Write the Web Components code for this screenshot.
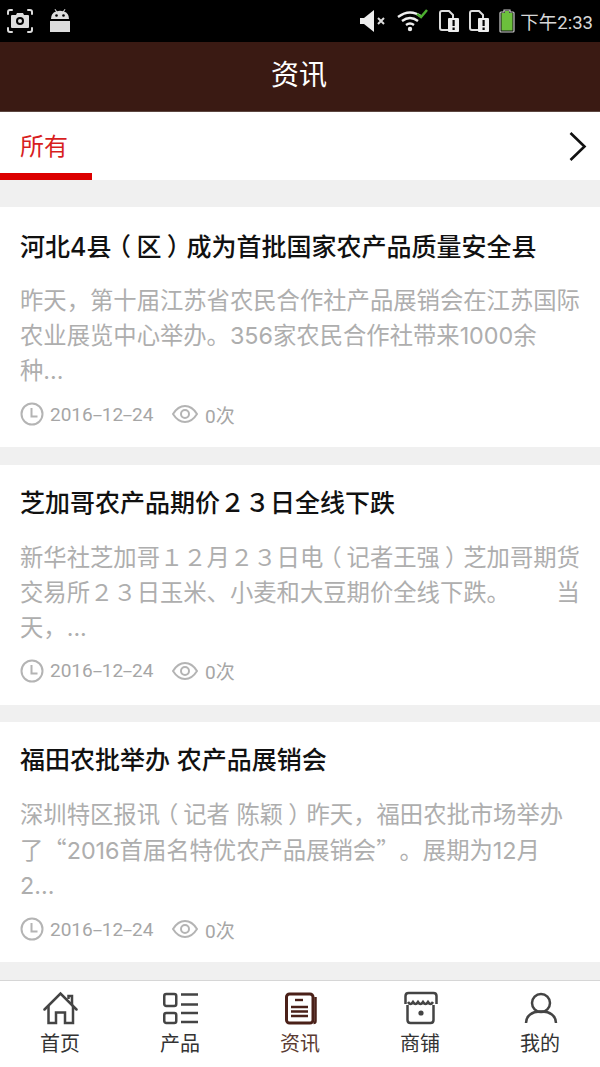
<!DOCTYPE html>
<html lang="zh">
<head>
<meta charset="utf-8">
<title>资讯</title>
<style>
    html, body{ margin: 0; padding: 0; }
    body{
        width: 600px;
        height: 1067px;
        overflow: hidden;
        background: #f0f0f0;
        font-family: Inter, "Noto Sans CJK SC", sans-serif;
        text-spacing-trim: space-all;
        display: flex;
        flex-direction: column;
    }
    news-list{ flex: 1; min-height: 0; }
    .cjk{ font-family: "Noto Sans CJK SC", sans-serif; }
</style>
</head>
<body>
<status-bar></status-bar>
<app-header>资讯</app-header>
<tab-strip>所有</tab-strip>
<news-list>
    <news-card date="2016-12-24" views="0次">
        <span slot="heading">河北4县<wide-mark>（</wide-mark>区<wide-mark>）</wide-mark>成为首批国家农产品质量安全县</span>
        昨天，第十届江苏省农民合作社产品展销会在江苏国际<br>农业展览中心举办。356家农民合作社带来1000余<br>种...
    </news-card>
    <news-card date="2016-12-24" views="0次">
        <span slot="heading">芝加哥农产品期价２３日全线下跌</span>
        新华社芝加哥１２月２３日电<wide-mark>（</wide-mark>记者王强<wide-mark>）</wide-mark>芝加哥期货<br>交易所２３日玉米、小麦和大豆期价全线下跌。　　当<br>天，...
    </news-card>
    <news-card date="2016-12-24" views="0次">
        <span slot="heading">福田农批举办 农产品展销会</span>
        深圳特区报讯<wide-mark>（</wide-mark>记者 陈颖<wide-mark>）</wide-mark>昨天，福田农批市场举办<br>了<span class="cjk">“</span>2016首届名特优农产品展销会<span class="cjk">”</span>。展期为12月<br>2...
    </news-card>
</news-list>
<bottom-nav>
    <nav-item label="首页" icon="home"></nav-item>
    <nav-item label="产品" icon="list"></nav-item>
    <nav-item label="资讯" icon="news" active></nav-item>
    <nav-item label="商铺" icon="shop"></nav-item>
    <nav-item label="我的" icon="user"></nav-item>
</bottom-nav>

<script>
class StatusBar extends HTMLElement {
    constructor() {
        super();
        this.attachShadow({mode: 'open'});
        this.shadowRoot.innerHTML = `
            <style>
                :host{
                    display: flex;
                    align-items: center;
                    height: 42px;
                    flex: none;
                    background: #000;
                    padding: 0 7px 0 7px;
                    color: #d8d8d8;
                }
                svg{ display: block; flex: none; }
                .left{ display: flex; align-items: center; gap: 17px; }
                .right{ margin-left: auto; display: flex; align-items: center; }
                .time{ font-size: 18.500px; margin-left: 5px; font-family: Roboto, "Noto Sans CJK SC", sans-serif; }
            </style>
            <div class="left">
                <svg width="26" height="24" viewBox="0 0 26 24" fill="none" stroke="#ddd" stroke-width="2" stroke-linecap="round">
                    <path d="M1 5V3q0-2 2-2h2M21 1h2q2 0 2 2v2M1 19v2q0 2 2 2h2M21 23h2q2 0 2-2v-2"/>
                    <path fill="#ddd" stroke="none" d="M5 6h4l1-2h6l1 2h4q1 0 1 1v11q0 1-1 1H5q-1 0-1-1V7q0-1 1-1z"/>
                    <circle cx="13" cy="12" r="4" fill="#000" stroke="none"/>
                    <circle cx="13" cy="12" r="2" fill="#ddd" stroke="none"/>
                </svg>
                <svg width="20" height="24" viewBox="0 0 20 24" fill="#ddd">
                    <path d="M1 10q0-6 5-7.500L4.500 0.500l.8-.5L7 2.300q3-1 6 0L14.700 0l.8.5L14 2.500q5 1.500 5 7.500z"/>
                    <circle cx="6.500" cy="6.500" r="1.300" fill="#000"/>
                    <circle cx="13.500" cy="6.500" r="1.300" fill="#000"/>
                    <path d="M0 12h20v11H0z"/>
                </svg>
            </div>
            <div class="right">
                <svg width="26" height="22" viewBox="0 0 26 22" fill="#eee">
                    <path d="M0 8h4L14 0v22L4 14H0z"/>
                    <path d="M18 8l6 6M24 8l-6 6" stroke="#ddd" stroke-width="2"/>
                </svg>
                <svg width="32" height="24" viewBox="0 0 32 24" fill="none" stroke="#eee" stroke-width="2.400" style="margin-left:11px">
                    <path d="M1 8q12-9 24 0M5 12q8-6 16 0M9 16q4-3 8 0"/>
                    <circle cx="13" cy="20" r="2.200" fill="#eee" stroke="none"/>
                    <path d="M20 5l4 3 6-7" stroke="#4caf2f" stroke-width="2.500"/>
                </svg>
                <svg width="20" height="24" viewBox="0 0 20 24" style="margin-left:9.500px">
                    <path d="M1 4q0-2 2-2h7l4 4v15H3q-2 0-2-2z" fill="none" stroke="#ddd" stroke-width="2"/>
                    <rect x="9" y="9" width="11" height="14" rx="1" fill="#eee"/>
                    <rect x="13.500" y="11" width="2.200" height="6" fill="#000"/>
                    <rect x="13.500" y="18.500" width="2.200" height="2.500" fill="#000"/>
                </svg>
                <svg width="20" height="24" viewBox="0 0 20 24" style="margin-left:10px">
                    <path d="M1 4q0-2 2-2h7l4 4v15H3q-2 0-2-2z" fill="none" stroke="#ddd" stroke-width="2"/>
                    <rect x="9" y="9" width="11" height="14" rx="1" fill="#eee"/>
                    <rect x="13.500" y="11" width="2.200" height="6" fill="#000"/>
                    <rect x="13.500" y="18.500" width="2.200" height="2.500" fill="#000"/>
                </svg>
                <svg width="16" height="24" viewBox="0 0 16 24" style="margin-left:10.500px">
                    <path d="M5 1h6v2h3q1 0 1 1v18q0 1-1 1H2q-1 0-1-1V4q0-1 1-1h3z" fill="#111" stroke="#ccc" stroke-width="1.200"/>
                    <path d="M6 2h4v2h3.500v17.500h-11V4H6z" fill="#6cc03c"/>
                </svg>
                <span class="time">下午2:33</span>
            </div>
        `;
    }
}

class AppHeader extends HTMLElement {
    constructor() {
        super();
        this.attachShadow({mode: 'open'});
        this.shadowRoot.innerHTML = `
            <style>
                :host{
                    display: flex;
                    align-items: center;
                    justify-content: center;
                    box-sizing: border-box;
                    flex: none;
                    height: 70px;
                    padding: 0 2px 8px 0;
                    background: #3a1a13;
                    border-bottom: solid 1px #5c4640;
                    color: #fff;
                    font-size: 28px;
                    font-family: "Noto Sans CJK SC", sans-serif;
                }
            </style>
            <slot></slot>
        `;
    }
}

class TabStrip extends HTMLElement {
    constructor() {
        super();
        this.attachShadow({mode: 'open'});
        this.shadowRoot.innerHTML = `
            <style>
                :host{
                    display: flex;
                    flex: none;
                    height: 68px;
                    background: #fff;
                }
                .tab{
                    box-sizing: border-box;
                    width: 92px;
                    padding: 15px 0 0 20px;
                    border-bottom: solid 7px #dc0000;
                    color: #d81e1e;
                    font-size: 24px;
                    line-height: 36px;
                    font-family: "Noto Sans CJK SC", sans-serif;
                }
                .more{
                    margin-left: auto;
                    width: 44px;
                    display: flex;
                    align-items: center;
                    justify-content: center;
                }
                svg{ display: block; }
            </style>
            <div class="tab"><slot></slot></div>
            <div class="more">
                <svg width="18" height="32" viewBox="0 0 18 32" fill="none" stroke="#111" stroke-width="2.600">
                    <path d="M1.500 3l14 13.500-14 13.500"/>
                </svg>
            </div>
        `;
    }
}

class NewsList extends HTMLElement {
    constructor() {
        super();
        this.attachShadow({mode: 'open'});
        this.shadowRoot.innerHTML = `
            <style>
                :host{
                    display: flex;
                    flex-direction: column;
                    gap: 17.500px;
                    padding-top: 27px;
                    overflow: hidden;
                }
            </style>
            <slot></slot>
        `;
    }
}

class NewsCard extends HTMLElement {
    constructor() {
        super();
        this.attachShadow({mode: 'open'});
        this.shadowRoot.innerHTML = `
            <style>
                :host{
                    display: block;
                    box-sizing: border-box;
                    height: 240px;
                    flex: none;
                    background: #fff;
                    padding: 18px 0 0 20px;
                }
                h2{
                    margin: 0;
                    font-size: 25px;
                    font-weight: 500;
                    line-height: 40px;
                    color: #111;
                    white-space: nowrap;
                }
                p{
                    margin: 16px 0 0 0;
                    font-size: 23.330px;
                    line-height: 35px;
                    color: #aeaeae;
                    white-space: nowrap;
                }
                .meta{
                    display: flex;
                    align-items: center;
                    margin-top: 11px;
                    height: 30px;
                    font-size: 19px;
                    color: #a6a6a6;
                    font-family: Roboto, "Noto Sans CJK SC", sans-serif;
                }
                .meta svg{ display: block; flex: none; }
                .date{ margin-left: 6px; width: 122px; }
                .date i{
                    display: inline-block;
                    width: 9px;
                    text-align: center;
                    font-style: normal;
                    transform: scaleX(1.800);
                }
                .views{ margin-left: 7px; }
            </style>
            <h2><slot name="heading"></slot></h2>
            <p><slot></slot></p>
            <div class="meta">
                <svg width="24" height="24" viewBox="0 0 24 24" fill="none" stroke="#b4b4b4" stroke-width="2">
                    <circle cx="12" cy="12" r="10.500"/>
                    <path d="M11.500 6v8.500h6"/>
                </svg>
                <span class="date"></span>
                <svg width="26" height="18" viewBox="0 0 26 18" fill="none" stroke="#b4b4b4" stroke-width="2">
                    <path d="M1 9q5-8 12-8t12 8q-5 8-12 8T1 9z"/>
                    <circle cx="13" cy="9" r="4"/>
                </svg>
                <span class="views"></span>
            </div>
        `;
    }

    connectedCallback() {
        this.shadowRoot.querySelector(".date").innerHTML = this.getAttribute("date").replace(/-/g, "<i>-</i>");
        this.shadowRoot.querySelector(".views").textContent = this.getAttribute("views");
    }
}

// full-width bracket with its ink in the middle of the em box
class WideMark extends HTMLElement {
    constructor() {
        super();
        this.attachShadow({mode: 'open'});
        this.shadowRoot.innerHTML = `
            <style>
                :host{
                    display: inline-block;
                    width: 1em;
                    text-align: center;
                    font-family: "Noto Sans CJK SC", sans-serif;
                    font-feature-settings: "palt";
                }
            </style>
            <slot></slot>
        `;
    }
}

class BottomNav extends HTMLElement {
    constructor() {
        super();
        this.attachShadow({mode: 'open'});
        this.shadowRoot.innerHTML = `
            <style>
                :host{
                    display: grid;
                    grid-template-columns: repeat(5, 1fr);
                    box-sizing: border-box;
                    flex: none;
                    height: 87px;
                    background: #fff;
                    border-top: solid 1px #d6d6d6;
                }
            </style>
            <slot></slot>
        `;
    }
}

const navIcons = {
    home: `<path d="M2.500 19.500l16-16 16 16" stroke-linecap="round"/><path d="M26.500 9V6H30v9"/><path d="M6.500 16v17H14V22.500h9V33h8V16"/>`,
    list: `<rect x="2.250" y="4" width="12" height="12" rx="2"/><rect x="2.250" y="23" width="12" height="10" rx="2"/><path d="M19 4.500h17M19 14.500h17M19 23h17M19 32h17"/>`,
    news: `<rect x="4.500" y="4" width="26.500" height="29" rx="3" stroke-width="3"/><path d="M33.500 7v24q0 2-2 2" stroke-width="2.500"/><path d="M13 10h8" stroke-width="2.400"/><path d="M9 17h17M9 21.500h17M9 26h17" stroke-width="2.400"/>`,
    shop: `<path d="M3.500 14V6q0-3 3-3h25q3 0 3 3v8"/><path d="M6 12q2.500 4 5 0 2.500 4 5 0 2.500 4 5 0 2.500 4 5 0 2.500 4 5 0"/><path d="M5.500 15v15q0 3 3 3h20q3 0 3-3V15"/><circle cx="19" cy="23" r="2.600" fill="currentColor" stroke="none"/>`,
    user: `<circle cx="19" cy="13" r="9"/><path d="M4 33c0-7 6-12 15-11.500C28 21 34 26 34 33"/>`
};

class NavItem extends HTMLElement {
    constructor() {
        super();
        this.attachShadow({mode: 'open'});
        this.shadowRoot.innerHTML = `
            <style>
                :host{
                    display: flex;
                    flex-direction: column;
                    align-items: center;
                    padding-top: 9px;
                    color: #444;
                    font-size: 20px;
                    line-height: 30px;
                    font-family: "Noto Sans CJK SC", sans-serif;
                }
                :host([active]){ color: #4a2018; }
                span{ color: #333; }
                :host([active]) span{ color: #5a3a32; }
                svg{ display: block; margin-bottom: 2px; }
            </style>
            <svg width="36" height="36" viewBox="0 0 36 36" fill="none" stroke="currentColor" stroke-width="2.500"></svg>
            <span></span>
        `;
    }

    connectedCallback() {
        this.shadowRoot.querySelector("svg").innerHTML = navIcons[this.getAttribute("icon")];
        this.shadowRoot.querySelector("span").textContent = this.getAttribute("label");
    }
}

window.customElements.define('status-bar', StatusBar);
window.customElements.define('app-header', AppHeader);
window.customElements.define('tab-strip', TabStrip);
window.customElements.define('news-list', NewsList);
window.customElements.define('news-card', NewsCard);
window.customElements.define('wide-mark', WideMark);
window.customElements.define('bottom-nav', BottomNav);
window.customElements.define('nav-item', NavItem);
</script>
</body>
</html>
